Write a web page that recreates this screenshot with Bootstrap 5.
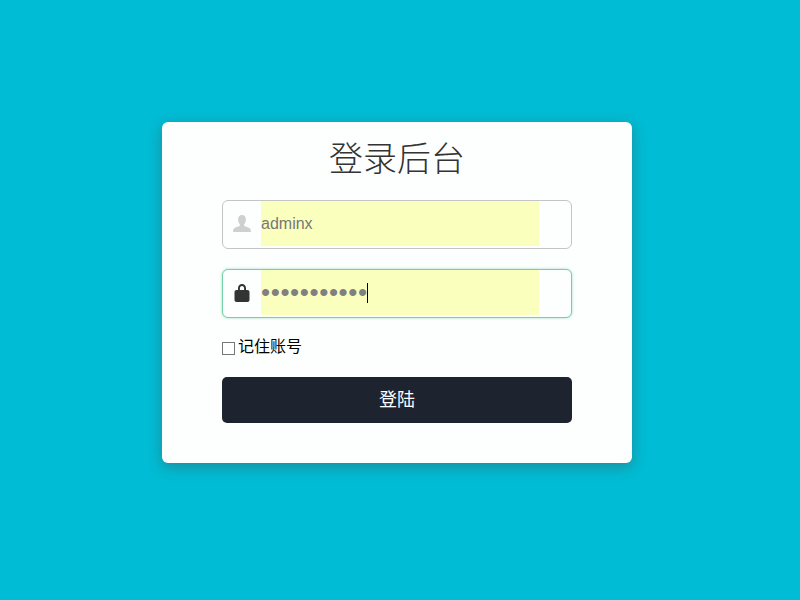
<!DOCTYPE html>
<html lang="zh-CN">
<head>
<meta charset="utf-8">
<title>登录后台</title>
<link href="https://cdn.jsdelivr.net/npm/bootstrap@5.3.0/dist/css/bootstrap.min.css" rel="stylesheet">
<style>
html,body{height:100%}
body{background:#00bcd4;font-family:"Liberation Sans","Noto Sans CJK SC",sans-serif;color:#000}
.stage{height:600px;padding-top:122px}
.login-box{width:470px;height:341px;margin-left:162px;background:#fdffff;border-radius:6px;box-shadow:0 4px 14px rgba(70,70,70,.4);padding:0 60px}
.login-title{font-family:"Liberation Serif","Noto Sans CJK SC",serif;font-weight:300;font-size:34px;line-height:38px;color:#333;text-align:center;margin:0;padding-top:19px;height:78px}
.field{height:49px;border:1px solid #c4c4c4;border-radius:6px;background:#fdffff;padding:0 32px 2px 0}
.field+.field{margin-top:20px}
.field-on{border-color:#75d0a6;box-shadow:0 0 3px rgba(117,208,166,.7)}
.field-ico{width:38px;flex:none}
.field-in{flex:1;min-width:0;width:0;border:0;outline:0;padding:0;background:#fbffbe;color:#777;font-size:16px;font-family:"Liberation Sans",sans-serif;height:45px}
.pw{position:relative;flex:1 1 0;min-width:0}
.pw .field-in{font-size:26px;letter-spacing:.6px;color:#808080}
.caret-bar{position:absolute;left:106px;top:13px;width:1px;height:20px;background:#000}
.remember{margin-top:19px;height:21px;font-size:16px;line-height:19px;gap:3px}
.remember input{appearance:none;width:13px;height:13px;border:1px solid #767676;background:#fff;margin:5px 0 0;flex:none}
.go{display:block;width:100%;height:46px;margin-top:19px;background:#1e2330;color:#fff;border:0;border-radius:5px;font-size:18px}
.go:hover{background:#1e2330;color:#fff}
</style>
</head>
<body class="m-0">
<div class="stage">
  <div class="login-box">
    <h1 class="login-title">登录后台</h1>
    <form>
      <div class="field d-flex align-items-center">
        <span class="field-ico d-flex justify-content-center">
          <svg width="20" height="20" viewBox="0 0 20 20" aria-hidden="true"><path fill="#cfcfcf" d="M10 1c2.600 0 3.900 2 3.900 4.600 0 1.900-.6 3.500-1.600 4.600-.4.500-.3 1.400.3 1.800 1.900 1 4.900 1.500 5.800 3 .4.600.5 1.500.5 3H1.100c0-1.500.1-2.400.5-3 .9-1.500 3.900-2 5.800-3 .6-.4.700-1.300.3-1.800C6.700 9.100 6.100 7.500 6.100 5.600 6.100 3 7.400 1 10 1z"/></svg>
        </span>
        <input class="field-in" type="text" value="adminx" aria-label="账号">
      </div>
      <div class="field field-on d-flex align-items-center">
        <span class="field-ico d-flex justify-content-center">
          <svg width="20" height="20" viewBox="0 0 20 20" aria-hidden="true"><path fill="#333" fill-rule="evenodd" d="M6 7V5.300C6 2.800 7.600 1 10 1s4 1.800 4 4.300V7h1.300c1.400 0 2.200.8 2.200 2v8c0 1.300-.8 2-2.200 2H4.700c-1.400 0-2.200-.7-2.200-2V9c0-1.200.8-2 2.200-2zM7.900 7h4.200V5.400C12.100 3.800 11.300 2.900 10 2.900S7.900 3.800 7.900 5.400z"/></svg>
        </span>
        <span class="pw d-flex">
          <input class="field-in" type="password" value="12345678901" aria-label="密码">
          <span class="caret-bar"></span>
        </span>
      </div>
      <label class="remember d-flex">
        <input type="checkbox">
        <span>记住账号</span>
      </label>
      <button type="button" class="btn go">登陆</button>
    </form>
  </div>
</div>
<script src="https://cdn.jsdelivr.net/npm/bootstrap@5.3.0/dist/js/bootstrap.bundle.min.js"></script>
</body>
</html>
